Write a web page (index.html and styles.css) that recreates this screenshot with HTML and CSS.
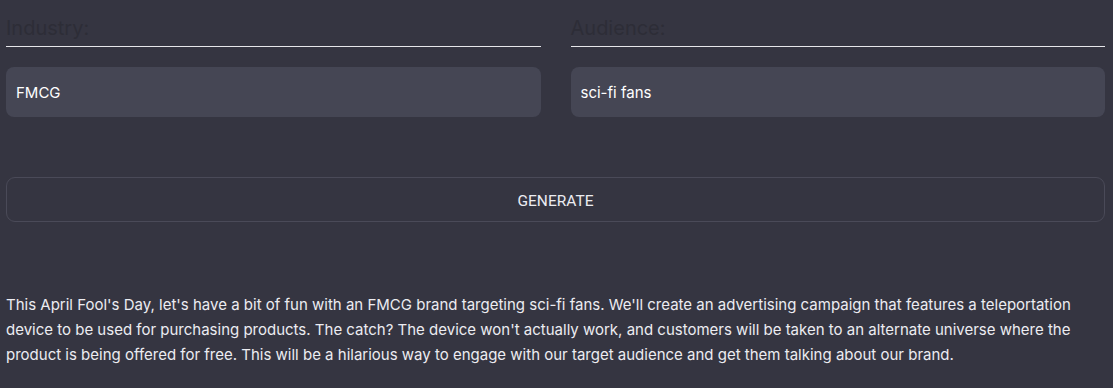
FILE: index.html
```html
<!doctype html>
<html lang="en">
<head>
    <meta charset="UTF-8">
    <title>Campaign generator</title>
    <link rel="stylesheet" href="styles.css">
</head>
<body>
<div class="main">
    <div class="fields">
        <div class="field">
            <label class="label" for="industry">Industry:</label>
            <input class="box" id="industry" type="text" value="FMCG">
        </div>
        <div class="field">
            <label class="label" for="audience">Audience:</label>
            <input class="box" id="audience" type="text" value="sci-fi fans">
        </div>
    </div>
    <button class="generate">GENERATE</button>
    <p class="result">This April Fool's Day, let's have a bit of fun with an FMCG brand targeting sci-fi fans. We'll create an advertising campaign that features a teleportation device to be used for purchasing products. The catch? The device won't actually work, and customers will be taken to an alternate universe where the product is being offered for free. This will be a hilarious way to engage with our target audience and get them talking about our brand.</p>
</div>
</body>
</html>
```

FILE: styles.css
```css
* {
    margin: 0;
    padding: 0;
    box-sizing: border-box;
}

body {
    background: #353541;
    font-family: Inter, "Liberation Sans", sans-serif;
    color: #ececf1;
}

.main {
    padding: 0 8px 0 6px;
}

.fields {
    display: grid;
    grid-template-columns: 1fr 1fr;
    column-gap: 30px;
}

.field {
    display: flex;
    flex-direction: column;
}

.label {
    display: block;
    height: 47px;
    padding-top: 16px;
    font-size: 20px;
    line-height: 24px;
    color: #2d2d37;
    border-bottom: 1px solid #e6e6ea;
}

.box {
    margin-top: 20px;
    height: 50px;
    padding: 0 10px;
    border: none;
    border-radius: 8px;
    background: #454654;
    color: #fff;
    font-family: Inter, "Liberation Sans", sans-serif;
    font-size: 15px;
    outline: none;
}

.generate {
    display: block;
    width: 100%;
    height: 45px;
    margin-top: 60px;
    padding-top: 3px;
    border: 1px solid #4a4a58;
    border-radius: 9px;
    background: transparent;
    color: #ececf1;
    font-family: Roboto, "Liberation Sans", sans-serif;
    font-size: 15.5px;
}

.result {
    margin-top: 70px;
    font-size: 15px;
    line-height: 25px;
}
```
